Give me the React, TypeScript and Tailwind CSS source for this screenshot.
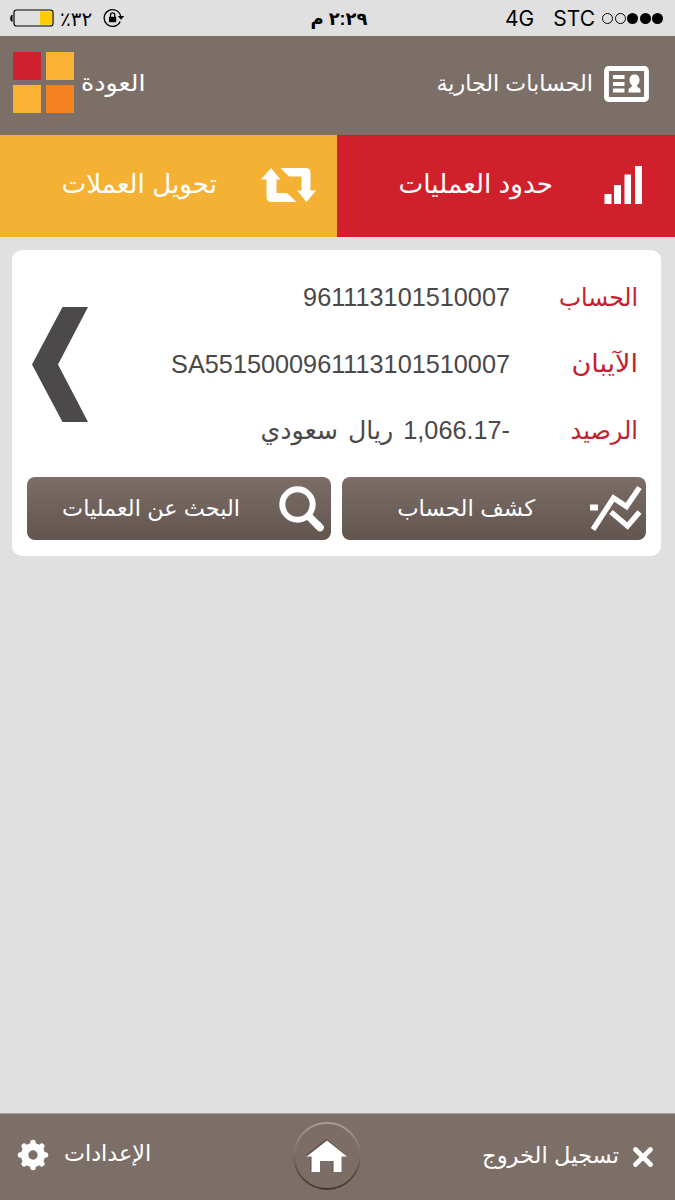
import type { ReactNode } from 'react';

const SignalIcon = () => (
  <svg width="38" height="40" viewBox="0 0 38 40" fill="white">
    <rect x="0.5" y="29" width="7" height="10" />
    <rect x="10" y="20" width="7" height="19" />
    <rect x="20.500" y="9.500" width="6.500" height="29.500" />
    <rect x="31" y="1" width="7" height="38" />
  </svg>
);

const ConvertIcon = () => (
  <svg width="56" height="36" viewBox="0 0 56 36" fill="white">
    <path d="M10 1 L19.500 12.500 H15.500 V26 H26 L35.500 35 H10.500 Q5.500 35 5.500 30 V12.500 H0 Z" />
    <path d="M19.500 1 H44.500 Q49.500 1 49.500 6 V23.500 H55 L45.500 35 L36 23.500 H40.500 V9.500 H28 Z" />
  </svg>
);

const AccountIcon = () => (
  <svg width="45" height="36" viewBox="0 0 45 36">
    <rect x="2.500" y="2.500" width="40" height="31" rx="2" fill="none" stroke="white" strokeWidth="4.800" />
    <path d="M9 9h11.500v4H9zM9 16h11.500v4H9zM9 22.500h11.500v4H9z" fill="white" />
    <path d="M30.500 8.500c3 0 5 2 5 5.500 0 2.500-1 4-2.500 5.500 0 2.500 3.500 2 3.500 4.500v2.500H24.500V24c0-2.500 3.500-2 3.500-4.500C26.500 18 25.500 16.500 25.500 14c0-3.500 2-5.500 5-5.500z" fill="white" />
  </svg>
);

const StatementIcon = () => (
  <svg width="52" height="46" viewBox="0 0 52 46" fill="none" stroke="white" strokeWidth="5.400">
    <path d="M3 43.500 L23.500 12 L36.500 20.500 L49.500 1.500" />
    <path d="M21 26 L37.500 40 L49.500 26" />
    <path d="M0 21.500h8" strokeWidth="6" />
  </svg>
);

const SearchIcon = () => (
  <svg width="46" height="46" viewBox="0 0 46 46" fill="none" stroke="white">
    <circle cx="18.500" cy="18.500" r="15.200" strokeWidth="6" />
    <path d="M29 29.500 L40 40.500" strokeWidth="7.500" />
    <path d="M38.500 39 L41 41.500" strokeWidth="7.500" strokeLinecap="round" />
  </svg>
);

const GearIcon = () => (
  <svg width="32" height="32" viewBox="0 0 32 32">
    <g stroke="white" strokeWidth="5.500" strokeLinecap="round">
      <path d="M16 3.500V8M16 24v4.500M3.500 16H8M24 16h4.500" />
      <path d="M7.200 7.200l3 3M21.800 21.800l3 3M7.200 24.800l3-3M21.800 10.200l3-3" />
    </g>
    <circle cx="16" cy="16" r="8.400" fill="none" stroke="white" strokeWidth="7.400" />
  </svg>
);

const CloseIcon = () => (
  <svg width="22" height="22" viewBox="0 0 22 22" stroke="white" strokeWidth="4.800" strokeLinecap="round">
    <path d="M3.500 3.500l15 15M18.500 3.500l-15 15" />
  </svg>
);

const HomeIcon = () => (
  <svg width="70" height="70" viewBox="0 0 70 70">
    <defs>
      <linearGradient id="ring" x1="0" y1="0" x2="0" y2="1">
        <stop offset="0" stopColor="#a89d96" />
        <stop offset="0.5" stopColor="#7a6b63" />
        <stop offset="1" stopColor="#43362f" />
      </linearGradient>
    </defs>
    <circle cx="35" cy="34" r="33" fill="#7c6e66" stroke="url(#ring)" strokeWidth="2" />
    <path d="M35 18 L55 34.500 H49.500 V50 H41 V39 H28.500 V50 H19 V34.500 H14 Z" fill="#5a4d46" transform="translate(-0.5 -1)" />
    <path d="M35 18.500 L55 34.500 H49.500 V50 H41.500 V39 H28 V50 H19.500 V34.500 H14.500 Z" fill="white" />
  </svg>
);

const RotationLockIcon = () => (
  <svg width="22" height="20" viewBox="0 0 22 20" fill="none" stroke="black">
    <path d="M17.200 13.500A8.400 8.400 0 1 1 17.700 8" strokeWidth="1.300" />
    <path d="M14.800 8h6.400L18 11.800z" fill="black" stroke="none" />
    <path d="M6 8.800h7.200v5.400H6z" fill="black" stroke="none" />
    <path d="M7.500 9V7a2.100 2.100 0 0 1 4.200 0v2" strokeWidth="1.300" />
  </svg>
);

const BatteryIcon = () => (
  <svg width="44" height="18" viewBox="0 0 44 18">
    <path d="M2.500 5.500v7.500C-0.500 12.500-0.500 6 2.500 5.500z" fill="black" />
    <rect x="4" y="1" width="39" height="16" rx="2.500" fill="none" stroke="black" strokeWidth="1.200" />
    <rect x="30" y="2.200" width="12.200" height="13.600" fill="#ffcc00" />
  </svg>
);

const rows = [
  { label: 'الحساب', value: '961113101510007', fit: 'scale-x-[0.94]' },
  { label: 'الآيبان', value: 'SA5515000961113101510007', fit: 'scale-x-[1.08]' },
  { label: 'الرصيد', value: '-1,066.17 ريال سعودي', fit: 'scale-x-[0.96]' },
];

const squares = ['bg-[#f9b233]', 'bg-[#d0202e]', 'bg-[#f58220]', 'bg-[#f9b233]'];

const ActionButton = ({ icon, children }: { icon: ReactNode; children: ReactNode }) => (
  <button className="flex h-[63px] w-[304px] items-center rounded-lg bg-linear-to-b from-[#7c6e67] to-[#62554f] pr-1 text-white">
    {icon}
    {children}
  </button>
);

export default function App() {
  return (
    <div
      dir="rtl"
      className="flex h-[1200px] w-[675px] flex-col overflow-hidden bg-[#e0e0e0] font-['Liberation_Sans','DejaVu_Sans',sans-serif] whitespace-nowrap"
    >
      <div className="grid h-9 shrink-0 grid-cols-3 items-center text-black">
        <div className="flex items-center pr-3">
          <div className="flex gap-[1.500px]">
            <span className="size-[11px] rounded-full bg-black" />
            <span className="size-[11px] rounded-full bg-black" />
            <span className="size-[11px] rounded-full bg-black" />
            <span className="size-[11px] rounded-full border border-black" />
            <span className="size-[11px] rounded-full border border-black" />
          </div>
          <span className="mt-0.5 mr-[7px] font-['Inter',sans-serif] text-[21px]">STC</span>
          <span className="mt-0.5 mr-[19px] font-['Inter',sans-serif] text-[21px]">4G</span>
        </div>
        <div className="pt-[3px] pl-[3px] text-center text-[18px] font-bold">٢:٢٩ م</div>
        <div className="flex items-center justify-end pl-[10px]">
          <RotationLockIcon />
          <span className="mt-0.5 mr-[11px] ml-[6px] text-[20px]">٣٢٪</span>
          <BatteryIcon />
        </div>
      </div>

      <header className="flex h-[99px] shrink-0 items-center bg-[#7c6f67] pr-[26px] pb-1 pl-[12.500px] text-white">
        <AccountIcon />
        <h1 className="mr-[11px] text-[22.200px]">الحسابات الجارية</h1>
        <span className="mr-auto ml-[7px] origin-left scale-x-110 text-[23px]">العودة</span>
        <div className="mt-[-2px] grid grid-cols-2 gap-[5px]">
          {squares.map((color, i) => (
            <span key={i} className={`size-[28px] ${color}`} />
          ))}
        </div>
      </header>

      <nav className="flex h-[102px] shrink-0 text-white">
        <a className="flex w-[338px] items-center bg-[#cf202c] pr-[33px] pb-[3px]">
          <SignalIcon />
          <span className="mr-[51px] text-[26.300px]">حدود العمليات</span>
        </a>
        <a className="flex w-[337px] items-center bg-[#f5b133] pr-[20px] pb-[3px]">
          <ConvertIcon />
          <span className="mr-[44px] text-[26.200px]">تحويل العملات</span>
        </a>
      </nav>

      <section className="mt-[13px] mr-[14px] flex h-[306px] w-[649px] shrink-0 flex-col rounded-[10px] bg-white pt-[14px]">
        <div className="flex h-[200px] items-center pr-[23px] pl-[20px]">
          <dl className="grow">
            {rows.map((row) => (
              <div key={row.label} className="flex h-[66.500px] items-center">
                <dt className={`w-[128px] origin-right text-[25px] text-[#c4202e] ${row.fit}`}>{row.label}</dt>
                <dd className="pt-px text-[25.250px] text-[#4a4848] [word-spacing:3px]">{row.value}</dd>
              </div>
            ))}
          </dl>
          <svg width="56" height="115" viewBox="0 0 56 115" fill="#4c494a">
            <path d="M30.500 0H56L26 57.500L56 115H30.500L0 57.500Z" />
          </svg>
        </div>
        <div className="mt-[13px] flex gap-[11px] pr-[15px]">
          <ActionButton icon={<StatementIcon />}>
            <span className="mr-[55px] text-[22.800px]">كشف الحساب</span>
          </ActionButton>
          <ActionButton icon={<span className="mr-[2px]"><SearchIcon /></span>}>
            <span className="mr-[39px] text-[22.400px]">البحث عن العمليات</span>
          </ActionButton>
        </div>
      </section>

      <footer className="mt-auto flex h-[87px] shrink-0 items-center border-t border-[#a9a19c] bg-[#7c6f67] pr-[21px] pl-[17px] text-white">
        <a className="flex w-[292px] items-center">
          <CloseIcon />
          <span className="mr-[13px] mb-[3px] text-[22.600px]">تسجيل الخروج</span>
        </a>
        <HomeIcon />
        <a className="mr-auto flex items-center pb-[5px]">
          <span className="mb-px ml-[15px] text-[22.300px]">الإعدادات</span>
          <GearIcon />
        </a>
      </footer>
    </div>
  );
}
